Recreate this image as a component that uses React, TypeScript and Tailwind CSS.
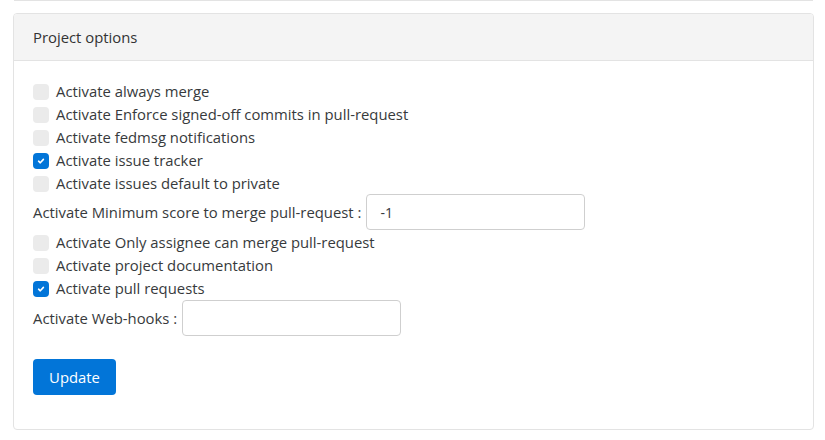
const font = { fontFamily: '"Open Sans", "Liberation Sans", sans-serif' }

const topOptions = [
  { label: 'Activate always merge', on: false },
  { label: 'Activate Enforce signed-off commits in pull-request', on: false },
  { label: 'Activate fedmsg notifications', on: false },
  { label: 'Activate issue tracker', on: true },
  { label: 'Activate issues default to private', on: false },
]

const bottomOptions = [
  { label: 'Activate Only assignee can merge pull-request', on: false },
  { label: 'Activate project documentation', on: false },
  { label: 'Activate pull requests', on: true },
]

function Box({ on }: { on: boolean }) {
  if (on) {
    return (
      <span className="flex h-4 w-4 shrink-0 items-center justify-center rounded-[4px] bg-[#0275d8]">
        <svg width="10" height="10" viewBox="0 0 10 10">
          <path d="M2.6 5.2 L4.3 6.8 L7.4 3.4" fill="none" stroke="#fff" strokeWidth="1.6" strokeLinecap="round" strokeLinejoin="round" />
        </svg>
      </span>
    )
  }
  return <span className="h-4 w-4 shrink-0 rounded-[4px] bg-[#ebebeb]" />
}

function Option({ label, on }: { label: string; on: boolean }) {
  return (
    <label className="flex h-[23px] items-center gap-[7px]">
      <Box on={on} />
      <span>{label}</span>
    </label>
  )
}

export default function App() {
  return (
    <div className="min-h-[440px] bg-white pl-[13px] pr-[11px] text-[14.85px] leading-[23px] text-[#373a3c]" style={font}>
      {/* bas de la carte précédente */}
      <div className="mx-px h-px bg-[#e3e3e3]" />

      <div className="mt-3 overflow-hidden rounded-[4px] border border-[#e3e3e3]">
        <div className="flex h-[47px] items-center border-b border-[#e3e3e3] bg-[#f4f4f4] px-[19px] text-[#333]">
          Project options
        </div>

        <form className="px-[19px] pt-[19px] pb-[34px]">
          {topOptions.map((o) => (
            <Option key={o.label} {...o} />
          ))}

          <div className="-mt-px flex items-center gap-[5px] pb-px">
            <span>Activate Minimum score to merge pull-request :</span>
            <div className="flex h-9 w-[219px] items-center rounded-[4px] border border-[#cfcfcf] px-[13px] text-[14px]">
              -1
            </div>
          </div>

          {bottomOptions.map((o) => (
            <Option key={o.label} {...o} />
          ))}

          <div className="flex items-center gap-[5px]">
            <span>Activate Web-hooks :</span>
            <div className="h-9 w-[219px] rounded-[4px] border border-[#cfcfcf]" />
          </div>

          <button type="button" className="mt-[23px] flex h-9 w-[83px] items-center justify-center rounded-[4px] bg-[#0275d8] text-white">
            Update
          </button>
        </form>
      </div>
    </div>
  )
}
